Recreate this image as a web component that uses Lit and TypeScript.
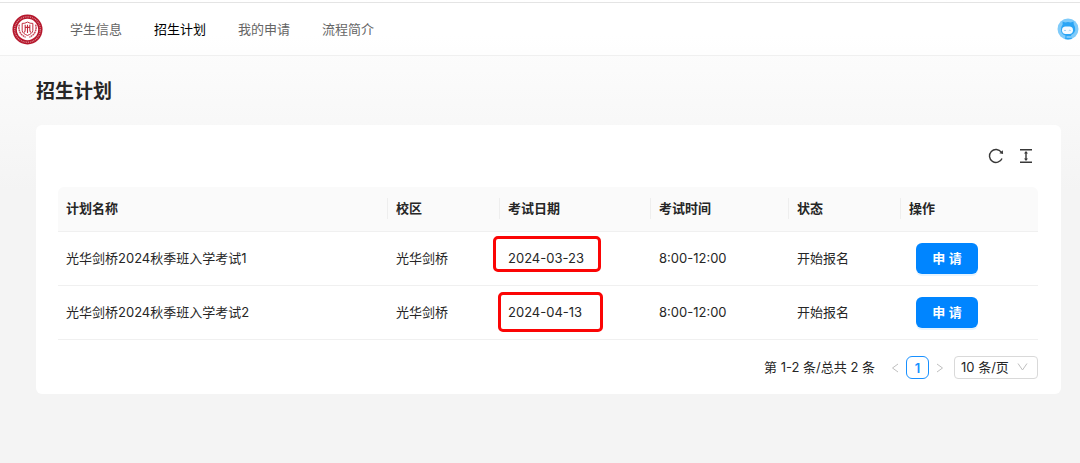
import { LitElement, html, css, svg } from "lit";
import { customElement, state } from "lit/decorators.js";

interface Plan {
  name: string;
  campus: string;
  date: string;
  time: string;
  status: string;
  mark: string;
}

const navItems = ["学生信息", "招生计划", "我的申请", "流程简介"];

const plans: Plan[] = [
  { name: "光华剑桥2024秋季班入学考试1", campus: "光华剑桥", date: "2024-03-23", time: "8:00-12:00", status: "开始报名", mark: "mark mark-first" },
  { name: "光华剑桥2024秋季班入学考试2", campus: "光华剑桥", date: "2024-04-13", time: "8:00-12:00", status: "开始报名", mark: "mark mark-second" },
];

const crest = svg`
  <circle cx="16" cy="16" r="15.500" fill="#b5162b"/>
  <circle cx="16" cy="16" r="13.200" fill="none" stroke="#d98791" stroke-width="1.400" stroke-dasharray="1 .9"/>
  <circle cx="16" cy="16" r="11" fill="#fff"/>
  <path d="M7.600 11c-1.600 5.500.9 10.500 6.400 13M24.400 11c1.600 5.500-.9 10.500-6.400 13" fill="none" stroke="#c9485a" stroke-width="1.500" stroke-dasharray="2 .5"/>
  <path d="M10.500 9.700q2.800.3 5.500-1.400 2.700 1.700 5.500 1.400v7.200c0 2.400-2.400 4-5.500 5.200-3.100-1.200-5.500-2.800-5.500-5.200z" fill="#fff" stroke="#c0283b" stroke-width="1"/>
  <path d="M13.600 11v5.500q0 1.500-1 2.500M18.400 11v5.500q0 1.500 1 2.500M13.600 13.800h4.800M16 11v8.500" fill="none" stroke="#c0283b" stroke-width="1.100"/>`;

const robot = svg`
  <defs><clipPath id="face"><circle cx="11" cy="11" r="10.500"/></clipPath></defs>
  <g clip-path="url(#face)">
    <rect width="22" height="22" fill="#7fcbfa"/>
    <path d="M5.500 3.500l2.700.9Q11 3.400 13.800 4.400l2.700-.9.3 3q2 2.500 1.400 6-.8 3.500-4.200 4.700l1 4.800H8l.5-4.500Q4 16.200 4 11.500q0-2.800 1.700-5z" fill="#2aa5f5"/>
    <rect x="5" y="8.500" width="11" height="7.500" rx="3.700" fill="#f4faff"/>
    <path d="M7 12.800q1-1.300 2 0M11.800 12.800q1-1.300 2 0" fill="none" stroke="#8ac8f0" stroke-width=".8"/>
    <path d="M9.500 19h5" stroke="#8fd2fd" stroke-width="1.500"/>
  </g>`;

@customElement("app-root")
export class AppRoot extends LitElement {
  @state() private active = "招生计划";

  static styles = css`
    :host {
      display: block;
      box-sizing: border-box;
      min-height: 100vh;
      padding-top: 2px;
      background: linear-gradient(#ffffff, #f4f4f4 41%);
      color: #262626;
      font: 13px/20px Inter, "Noto Sans CJK SC", sans-serif;
    }
    * { box-sizing: border-box; }
    button, select { font: inherit; margin: 0; cursor: pointer; }
    svg { display: block; }
    .bar {
      display: flex;
      align-items: center;
      height: 54px;
      padding: 0 1px 0 12px;
      border-top: 1px solid #e4e4e4;
      border-bottom: 1px solid #f0f0f0;
      background: rgba(255, 255, 255, 0.7);
    }
    .nav { display: flex; gap: 32px; flex: 1; margin-left: 27px; }
    .nav a { color: #656565; text-decoration: none; }
    .nav a.active { color: #000; }
    main { padding: 24px 19px 24px 36px; }
    h1 { margin: 0; font-size: 19px; line-height: 24px; font-weight: 600; }
    .card {
      margin-top: 21px;
      padding: 0 23px 15px 22px;
      border-radius: 6px;
      background: #fff;
    }
    .tools { display: flex; justify-content: flex-end; align-items: center; gap: 14px; height: 62px; padding-right: 4px; }
    .tool { padding: 0; border: 0; background: none; color: #383838; }
    table { width: 100%; table-layout: fixed; border-collapse: separate; border-spacing: 0; }
    .campus, .status { width: 112px; }
    .date { width: 151px; }
    .time { width: 138px; }
    .action { width: 137px; }
    th {
      position: relative;
      height: 45px;
      padding: 0 8px 2px;
      text-align: left;
      font-weight: 600;
      background: #fafafa;
      border-bottom: 1px solid #f0f0f0;
    }
    th + th::before {
      content: "";
      position: absolute;
      left: -1px;
      top: 11px;
      width: 1px;
      height: 21px;
      background: #eeeeee;
    }
    th:first-child { border-top-left-radius: 6px; }
    th:last-child { border-top-right-radius: 6px; }
    td { position: relative; height: 54px; padding: 0 8px 1px; border-bottom: 1px solid #f0f0f0; }
    .mark { position: absolute; border: 3px solid #fb0505; border-radius: 5px; pointer-events: none; }
    .mark-first { inset: 4px 50px 13px -7px; }
    .mark-second { inset: 6px 48px 7px -2px; }
    .apply {
      display: block;
      width: 62px;
      height: 31px;
      margin-left: 7px;
      padding: 0 0 1px;
      border: 0;
      border-radius: 6px;
      background: #0085ff;
      box-shadow: 0 2px 0 rgba(5, 145, 255, 0.1);
      color: #fff;
      font-weight: 600;
    }
    .pager { display: flex; justify-content: flex-end; align-items: center; height: 23px; margin-top: 16px; }
    .total { margin-right: 14px; padding-bottom: 2px; }
    .arrow { width: 12px; height: 23px; padding: 0 2px; border: 0; background: none; color: #bfbfbf; }
    .page {
      width: 23px;
      height: 23px;
      margin: 0 5px;
      padding: 0;
      border: 1px solid #1890ff;
      border-radius: 6px;
      background: #fff;
      color: #1890ff;
      font-weight: 600;
      line-height: 20px;
    }
    .size { position: relative; margin-left: 8px; }
    .size select {
      display: block;
      appearance: none;
      width: 84px;
      height: 23px;
      padding: 0 6px 2px;
      border: 1px solid #d9d9d9;
      border-radius: 4px;
      background: #fff;
      color: #262626;
      line-height: 20px;
    }
    .size svg { position: absolute; right: 10px; top: 6px; pointer-events: none; color: #bfbfbf; }
  `;

  render() {
    return html`
      <header class="bar">
        <svg width="31" height="31" viewBox="0 0 32 32" role="img" aria-label="校徽">${crest}</svg>
        <nav class="nav">
          ${navItems.map(
            (item) => html`<a href="#" class=${item === this.active ? "active" : ""} @click=${(e: Event) => { e.preventDefault(); this.active = item; }}>${item}</a>`
          )}
        </nav>
        <svg width="22" height="22" viewBox="0 0 22 22" role="img" aria-label="用户">${robot}</svg>
      </header>
      <main>
        <h1>招生计划</h1>
        <section class="card">
          <div class="tools">
            <button class="tool" aria-label="刷新">
              <svg width="16" height="16" viewBox="0 0 16 16" fill="none" stroke="currentColor" stroke-width="1.400">
                <path d="M14 10.400A6.500 6.500 0 1 1 13.300 4.200"/>
                <path d="M14.800 2.300l.3 3.700-3.800-.8z" fill="currentColor" stroke="none"/>
              </svg>
            </button>
            <button class="tool" aria-label="密度">
              <svg width="16" height="16" viewBox="0 0 16 16" fill="none" stroke="currentColor" stroke-width="1.400">
                <path d="M2 1.700h12M2 14.300h12M8 4.500v7"/>
                <path d="M8 3l2 2.600H6zM8 13l2-2.600H6z" fill="currentColor" stroke="none"/>
              </svg>
            </button>
          </div>
          <table>
            <thead>
              <tr>
                <th>计划名称</th>
                <th class="campus">校区</th>
                <th class="date">考试日期</th>
                <th class="time">考试时间</th>
                <th class="status">状态</th>
                <th class="action">操作</th>
              </tr>
            </thead>
            <tbody>
              ${plans.map(
                (p) => html`<tr>
                  <td>${p.name}</td>
                  <td>${p.campus}</td>
                  <td>${p.date}<span class=${p.mark}></span></td>
                  <td>${p.time}</td>
                  <td>${p.status}</td>
                  <td><button class="apply">申 请</button></td>
                </tr>`
              )}
            </tbody>
          </table>
          <div class="pager">
            <span class="total">第 1-2 条/总共 2 条</span>
            <button class="arrow" aria-label="上一页" disabled>
              <svg width="8" height="10" viewBox="0 0 8 10" fill="none" stroke="currentColor"><path d="M7 1L1.500 5 7 9"/></svg>
            </button>
            <button class="page" aria-current="page">1</button>
            <button class="arrow" aria-label="下一页" disabled>
              <svg width="8" height="10" viewBox="0 0 8 10" fill="none" stroke="currentColor"><path d="M1 1l5.500 4L1 9"/></svg>
            </button>
            <div class="size">
              <select aria-label="每页条数">
                <option>10 条/页</option>
                <option>20 条/页</option>
                <option>50 条/页</option>
              </select>
              <svg width="11" height="10" viewBox="0 0 11 10" fill="none" stroke="currentColor"><path d="M1 1.500l4.500 6.500L10 1.500"/></svg>
            </div>
          </div>
        </section>
      </main>
    `;
  }
}
